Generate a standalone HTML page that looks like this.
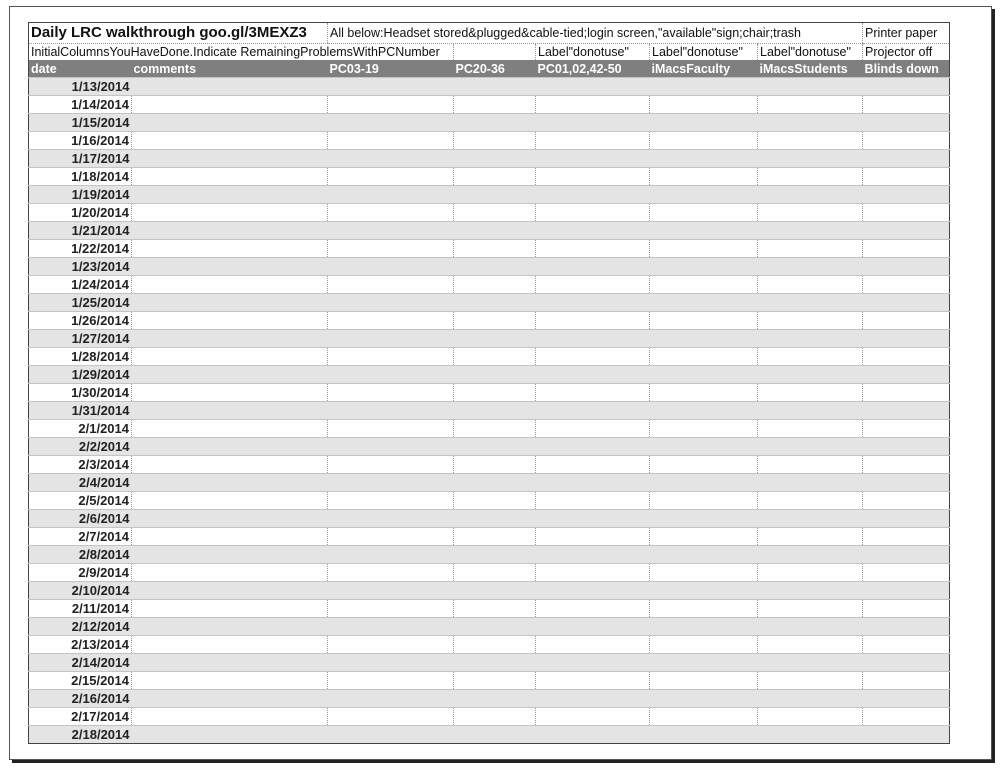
<!DOCTYPE html>
<html><head><meta charset="utf-8"><style>
body{margin:0;background:#fff;width:1005px;height:768px;overflow:hidden;position:relative;font-family:"Liberation Sans",sans-serif;}
.page{position:absolute;left:9px;top:6px;width:981px;height:752px;border:1px solid #555;box-shadow:3px 3px 0 #222;background:#fff;}
table{position:absolute;left:28px;top:22px;border-collapse:collapse;table-layout:fixed;width:921px;border:1px solid #444;}
td{padding:0 2px;font-size:12.5px;white-space:nowrap;overflow:hidden;color:#111;line-height:16px;}
tr.t td{height:20px;border-bottom:1px dotted #999;}
tr.t td.ti{font-size:15px;font-weight:bold;}
tr.s td{height:16px;}
tr.h td{height:17px;background:#7f7f7f;color:#fff;font-weight:bold;font-size:12.5px;}
tr.g td{height:17px;background:#e4e4e4;border-top:1px solid #c4c4c4;}
tr.w td{height:17px;background:#fff;border-top:1px solid #c4c4c4;border-right:1px dotted #999;}
tr.w td:last-child{border-right:none}
td.d{text-align:right;font-weight:bold;color:#222;font-size:13px;}
.dl{border-left:1px dotted #999;}
</style></head><body>
<div class="page"></div>
<table>
<colgroup><col style="width:103px"><col style="width:196px"><col style="width:126px"><col style="width:82px"><col style="width:114px"><col style="width:108px"><col style="width:105px"><col style="width:87px"></colgroup>
<tr class="t"><td colspan="2" class="ti">Daily LRC walkthrough goo.gl/3MEXZ3</td><td colspan="5" class="dl">All below:Headset stored&amp;plugged&amp;cable-tied;login screen,"available"sign;chair;trash</td><td class="dl">Printer paper</td></tr>
<tr class="s"><td colspan="3">InitialColumnsYouHaveDone.Indicate RemainingProblemsWithPCNumber</td><td class="dl"></td><td class="dl">Label"donotuse"</td><td class="dl">Label"donotuse"</td><td class="dl">Label"donotuse"</td><td class="dl">Projector off</td></tr>
<tr class="h"><td>date</td><td>comments</td><td>PC03-19</td><td>PC20-36</td><td>PC01,02,42-50</td><td>iMacsFaculty</td><td>iMacsStudents</td><td>Blinds down</td></tr>
<tr class="g"><td class="d">1/13/2014</td><td colspan="7"></td></tr>
<tr class="w"><td class="d">1/14/2014</td><td></td><td></td><td></td><td></td><td></td><td></td><td></td></tr>
<tr class="g"><td class="d">1/15/2014</td><td colspan="7"></td></tr>
<tr class="w"><td class="d">1/16/2014</td><td></td><td></td><td></td><td></td><td></td><td></td><td></td></tr>
<tr class="g"><td class="d">1/17/2014</td><td colspan="7"></td></tr>
<tr class="w"><td class="d">1/18/2014</td><td></td><td></td><td></td><td></td><td></td><td></td><td></td></tr>
<tr class="g"><td class="d">1/19/2014</td><td colspan="7"></td></tr>
<tr class="w"><td class="d">1/20/2014</td><td></td><td></td><td></td><td></td><td></td><td></td><td></td></tr>
<tr class="g"><td class="d">1/21/2014</td><td colspan="7"></td></tr>
<tr class="w"><td class="d">1/22/2014</td><td></td><td></td><td></td><td></td><td></td><td></td><td></td></tr>
<tr class="g"><td class="d">1/23/2014</td><td colspan="7"></td></tr>
<tr class="w"><td class="d">1/24/2014</td><td></td><td></td><td></td><td></td><td></td><td></td><td></td></tr>
<tr class="g"><td class="d">1/25/2014</td><td colspan="7"></td></tr>
<tr class="w"><td class="d">1/26/2014</td><td></td><td></td><td></td><td></td><td></td><td></td><td></td></tr>
<tr class="g"><td class="d">1/27/2014</td><td colspan="7"></td></tr>
<tr class="w"><td class="d">1/28/2014</td><td></td><td></td><td></td><td></td><td></td><td></td><td></td></tr>
<tr class="g"><td class="d">1/29/2014</td><td colspan="7"></td></tr>
<tr class="w"><td class="d">1/30/2014</td><td></td><td></td><td></td><td></td><td></td><td></td><td></td></tr>
<tr class="g"><td class="d">1/31/2014</td><td colspan="7"></td></tr>
<tr class="w"><td class="d">2/1/2014</td><td></td><td></td><td></td><td></td><td></td><td></td><td></td></tr>
<tr class="g"><td class="d">2/2/2014</td><td colspan="7"></td></tr>
<tr class="w"><td class="d">2/3/2014</td><td></td><td></td><td></td><td></td><td></td><td></td><td></td></tr>
<tr class="g"><td class="d">2/4/2014</td><td colspan="7"></td></tr>
<tr class="w"><td class="d">2/5/2014</td><td></td><td></td><td></td><td></td><td></td><td></td><td></td></tr>
<tr class="g"><td class="d">2/6/2014</td><td colspan="7"></td></tr>
<tr class="w"><td class="d">2/7/2014</td><td></td><td></td><td></td><td></td><td></td><td></td><td></td></tr>
<tr class="g"><td class="d">2/8/2014</td><td colspan="7"></td></tr>
<tr class="w"><td class="d">2/9/2014</td><td></td><td></td><td></td><td></td><td></td><td></td><td></td></tr>
<tr class="g"><td class="d">2/10/2014</td><td colspan="7"></td></tr>
<tr class="w"><td class="d">2/11/2014</td><td></td><td></td><td></td><td></td><td></td><td></td><td></td></tr>
<tr class="g"><td class="d">2/12/2014</td><td colspan="7"></td></tr>
<tr class="w"><td class="d">2/13/2014</td><td></td><td></td><td></td><td></td><td></td><td></td><td></td></tr>
<tr class="g"><td class="d">2/14/2014</td><td colspan="7"></td></tr>
<tr class="w"><td class="d">2/15/2014</td><td></td><td></td><td></td><td></td><td></td><td></td><td></td></tr>
<tr class="g"><td class="d">2/16/2014</td><td colspan="7"></td></tr>
<tr class="w"><td class="d">2/17/2014</td><td></td><td></td><td></td><td></td><td></td><td></td><td></td></tr>
<tr class="g"><td class="d">2/18/2014</td><td colspan="7"></td></tr>
</table>
</body></html>
